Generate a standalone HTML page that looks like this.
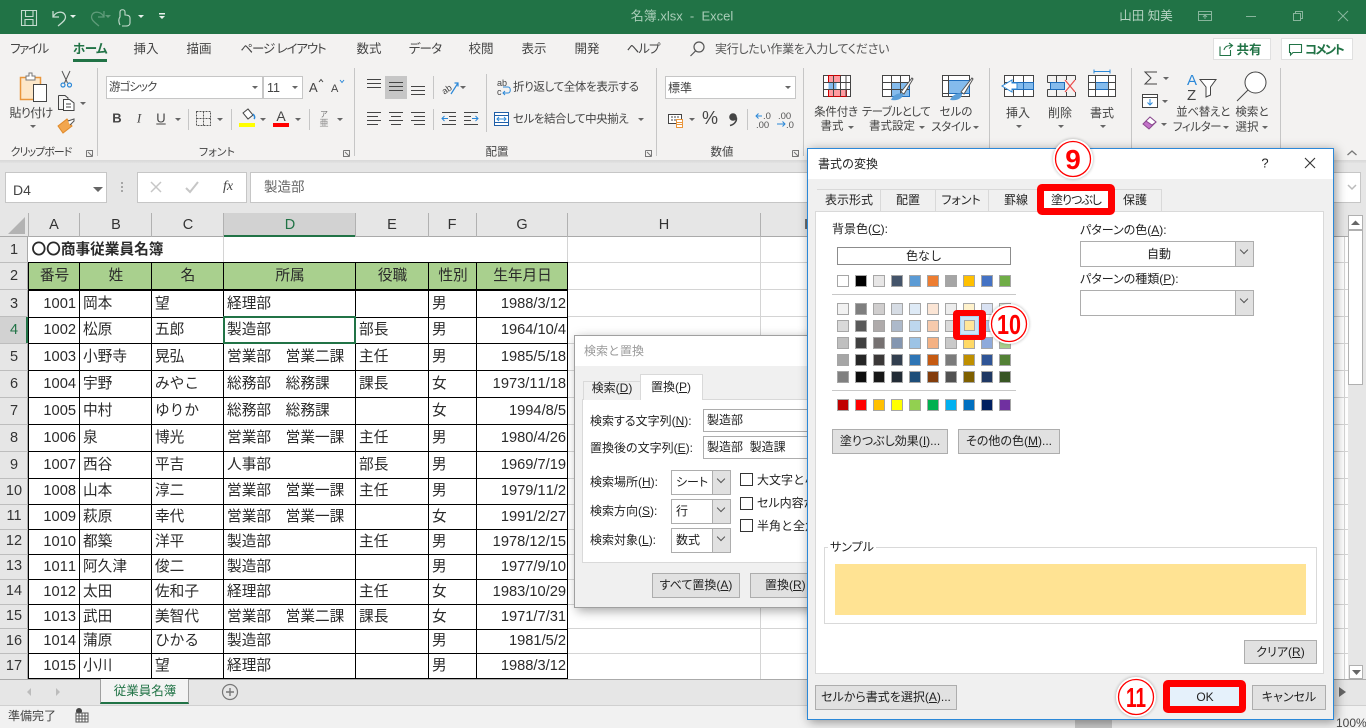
<!DOCTYPE html>
<html lang="ja"><head><meta charset="utf-8"><title>名簿.xlsx - Excel</title>
<style>
html,body{margin:0;padding:0;width:1366px;height:728px;overflow:hidden;background:#fff}
body{position:relative;font-family:"Liberation Sans","Noto Sans CJK JP",sans-serif;font-feature-settings:"palt";color:#444;font-size:12px}
.b{position:absolute;box-sizing:border-box}
.t{position:absolute;white-space:nowrap;line-height:1;transform:translateY(-50%)}
.c{transform:translate(-50%,-50%)}
svg{position:absolute;left:0;top:0}
.d{color:#222}
.btn{position:absolute;box-sizing:border-box;background:#e1e1e1;border:1px solid #adadad;color:#222;text-align:center;white-space:nowrap;font-size:12px}
.cmb{position:absolute;box-sizing:border-box;background:#fff;border:1px solid #adadad;color:#222;white-space:nowrap;font-size:12px}
.cmb i{position:absolute;right:0;top:0;bottom:0;width:17px;background:#e1e1e1;border-left:1px solid #adadad}
.cmb i:after{content:"";position:absolute;left:5px;top:5px;width:5px;height:5px;border-right:1px solid #555;border-bottom:1px solid #555;transform:rotate(45deg)}
table{position:absolute;left:28px;top:237px;border-collapse:collapse;table-layout:fixed;width:539px;font-size:14.67px;color:#2a2a2a;font-feature-settings:normal;font-kerning:none}
td{border:1px solid #000;padding:1px 2px 0 3px;white-space:nowrap;overflow:hidden;line-height:1;vertical-align:middle}
td.r{text-align:right;padding-right:1px}
td.r:first-child{padding-right:3px}
tr.h td{background:#a9d08e;text-align:center;border-bottom:2px solid #000;padding-top:2px}
.rh{position:absolute;left:0;width:28px;text-align:center;font-size:14.5px;line-height:1;transform:translateY(-50%);color:#333}
.ch{position:absolute;top:225px;font-size:14.5px;line-height:1;transform:translate(-50%,-50%);color:#333}
</style></head><body>

<!-- title bar -->
<div class="b" style="left:0;top:0;width:1366px;height:34px;background:#217346"></div>
<div class="b" style="left:0;top:34px;width:1366px;height:128px;background:#f3f2f1"></div>
<div class="b" style="left:0;top:160px;width:1366px;height:4px;background:linear-gradient(#d8d8d8,#e6e6e6)"></div>
<div class="b" style="left:0;top:163px;width:1366px;height:50px;background:#e6e6e6"></div>
<div class="t c" style="left:682px;top:16px;font-size:13px;color:#a9cdb8;font-feature-settings:normal">名簿.xlsx&nbsp; -&nbsp; Excel</div>
<div class="t c" style="left:1146px;top:16px;font-size:12.5px;color:#b5d3c2">山田 知美</div>

<!-- ribbon tabs -->
<div class="t c" style="left:29px;top:49px;font-size:12.5px;letter-spacing:-1.400px">ファイル</div>
<div class="t c" style="left:90px;top:49px;font-size:12.5px;font-weight:bold;color:#217346;letter-spacing:-.5px">ホーム</div>
<div class="b" style="left:73px;top:59px;width:34px;height:3px;background:#217346"></div>
<div class="t c" style="left:146px;top:49px;font-size:12.5px">挿入</div>
<div class="t c" style="left:199px;top:49px;font-size:12.5px">描画</div>
<div class="t c" style="left:283px;top:49px;font-size:12.5px;letter-spacing:-1.100px">ページ レイアウト</div>
<div class="t c" style="left:369px;top:49px;font-size:12.5px">数式</div>
<div class="t c" style="left:425px;top:49px;font-size:12.5px;letter-spacing:-.8px">データ</div>
<div class="t c" style="left:481px;top:49px;font-size:12.5px">校閲</div>
<div class="t c" style="left:534px;top:49px;font-size:12.5px">表示</div>
<div class="t c" style="left:587px;top:49px;font-size:12.5px">開発</div>
<div class="t c" style="left:643px;top:49px;font-size:12.5px;letter-spacing:-1px">ヘルプ</div>
<div class="t" style="left:715px;top:49px;font-size:12px;color:#555;letter-spacing:-.3px">実行したい作業を入力してください</div>
<div class="b" style="left:1213px;top:38px;width:58px;height:22px;background:#fff;border:1px solid #e0e0e0"></div>
<div class="t c" style="left:1249px;top:50px;font-size:12.5px;font-weight:bold;color:#217346">共有</div>
<div class="b" style="left:1281px;top:38px;width:72px;height:22px;background:#fff;border:1px solid #e0e0e0"></div>
<div class="t c" style="left:1324px;top:50px;font-size:12.5px;font-weight:bold;color:#217346;letter-spacing:-1.800px">コメント</div>

<!-- ribbon combo boxes -->
<div class="b" style="left:106px;top:76px;width:157px;height:23px;background:#fff;border:1px solid #c6c6c6"></div>
<div class="t" style="left:109px;top:88px;font-size:11.5px;letter-spacing:-1px">游ゴシック</div>
<div class="b" style="left:263px;top:76px;width:40px;height:23px;background:#fff;border:1px solid #c6c6c6"></div>
<div class="t" style="left:267px;top:88px;font-size:12.5px">11</div>
<div class="b" style="left:385px;top:76px;width:22px;height:23px;background:#c6c6c6"></div>
<div class="b" style="left:665px;top:76px;width:131px;height:23px;background:#fff;border:1px solid #c6c6c6"></div>
<div class="t" style="left:668px;top:88px;font-size:12px">標準</div>

<!-- ribbon text -->
<div class="t c" style="left:31px;top:113px;font-size:12px;letter-spacing:-.7px">貼り付け</div>
<div class="t c" style="left:41px;top:153px;font-size:11px;letter-spacing:-1px">クリップボード</div>
<div class="t c" style="left:217px;top:153px;font-size:11px">フォント</div>
<div class="t c" style="left:497px;top:153px;font-size:11.5px">配置</div>
<div class="t c" style="left:722px;top:153px;font-size:11.5px">数値</div>
<div class="t c" style="left:117px;top:118px;font-size:13px;font-weight:bold">B</div>
<div class="t c" style="left:139px;top:118px;font-size:13px;font-style:italic;font-family:'Liberation Serif',serif">I</div>
<div class="t c" style="left:161px;top:118px;font-size:13px;text-decoration:underline">U</div>
<div class="t" style="left:513px;top:88px;font-size:11.5px;letter-spacing:-.35px">折り返して全体を表示する</div>
<div class="t" style="left:513px;top:120px;font-size:11.5px;letter-spacing:-.45px">セルを結合して中央揃え</div>
<div class="t c" style="left:710px;top:118px;font-size:18px">%</div>
<div class="t c" style="left:836px;top:113px;font-size:11.500px;letter-spacing:-.2px">条件付き</div>
<div class="t c" style="left:832px;top:127px;font-size:11.500px">書式</div>
<div class="t c" style="left:896px;top:113px;font-size:11.500px;letter-spacing:-.5px">テーブルとして</div>
<div class="t c" style="left:892px;top:127px;font-size:11.500px">書式設定</div>
<div class="t c" style="left:956px;top:113px;font-size:11.500px">セルの</div>
<div class="t c" style="left:951px;top:128px;font-size:11.500px;letter-spacing:-.4px">スタイル</div>
<div class="t c" style="left:1018px;top:113px;font-size:12px">挿入</div>
<div class="t c" style="left:1060px;top:113px;font-size:12px">削除</div>
<div class="t c" style="left:1102px;top:113px;font-size:12px">書式</div>
<div class="t c" style="left:1203px;top:113px;font-size:11.500px;letter-spacing:-.3px">並べ替えと</div>
<div class="t c" style="left:1197px;top:128px;font-size:11.500px;letter-spacing:-.4px">フィルター</div>
<div class="t c" style="left:1252px;top:113px;font-size:11.500px">検索と</div>
<div class="t c" style="left:1247px;top:128px;font-size:11.500px">選択</div>

<!-- formula bar -->
<div class="b" style="left:5px;top:172px;width:102px;height:31px;background:#fff;border:1px solid #c6c6c6"></div>
<div class="t" style="left:13px;top:190px;font-size:14px">D4</div>
<div class="b" style="left:137px;top:172px;width:110px;height:31px;background:#fff;border:1px solid #c6c6c6"></div>
<div class="b" style="left:250px;top:172px;width:1111px;height:31px;background:#fff;border:1px solid #c6c6c6"></div>
<div class="t" style="left:264px;top:187px;font-size:13.5px;color:#666;font-feature-settings:normal">製造部</div>
<div class="t c" style="left:228px;top:187px;font-size:14px;font-style:italic;font-family:'Liberation Serif',serif;color:#444">fx</div>

<!-- column / row headers -->
<div class="b" style="left:0;top:213px;width:1348px;height:24px;background:#e6e6e6;border-bottom:1px solid #aaa"></div>
<div class="b" style="left:0;top:237px;width:28px;height:442px;background:#e6e6e6;border-right:1px solid #aaa"></div>
<div class="b" style="left:223px;top:213px;width:132px;height:24px;background:#d2d2d2;border-bottom:2px solid #217346"></div>
<div class="b" style="left:0;top:317px;width:28px;height:27px;background:#d2d2d2;border-right:2px solid #217346"></div>
<div class="ch" style="left:54px">A</div><div class="ch" style="left:116px">B</div><div class="ch" style="left:188px">C</div><div class="ch" style="left:290px;color:#217346">D</div><div class="ch" style="left:392px">E</div><div class="ch" style="left:452px">F</div><div class="ch" style="left:522px">G</div><div class="ch" style="left:664px">H</div><div class="ch" style="left:806px">I</div>
<div class="rh" style="top:250px">1</div><div class="rh" style="top:276px">2</div><div class="rh" style="top:304px">3</div><div class="rh" style="top:330px;color:#217346">4</div><div class="rh" style="top:357px">5</div><div class="rh" style="top:384px">6</div><div class="rh" style="top:411px">7</div><div class="rh" style="top:438px">8</div><div class="rh" style="top:465px">9</div><div class="rh" style="top:491px">10</div><div class="rh" style="top:516px">11</div><div class="rh" style="top:541px">12</div><div class="rh" style="top:566px">13</div><div class="rh" style="top:591px">14</div><div class="rh" style="top:616px">15</div><div class="rh" style="top:641px">16</div><div class="rh" style="top:666px">17</div>

<!-- grid -->
<svg width="1366" height="728" viewBox="0 0 1366 728">
<g stroke="#d4d4d4" fill="none">
<path d="M567 262.500H1348M567 289.500H1348M567 316.500H1348M567 343.500H1348M567 370.500H1348M567 397.500H1348M567 424.500H1348M567 451.500H1348M567 478.500H1348M567 504.500H1348M567 529.500H1348M567 554.500H1348M567 579.500H1348M567 604.500H1348M567 628.500H1348M567 653.500H1348"/>
<path d="M760.500 237V679M1344.500 237V679M223.500 237V262M567.500 237V262"/>
</g>
<g stroke="#bdbdbd" fill="none">
<path d="M0 262.500H28M0 289.500H28M0 316.500H28M0 343.500H28M0 370.500H28M0 397.500H28M0 424.500H28M0 451.500H28M0 478.500H28M0 504.500H28M0 529.500H28M0 554.500H28M0 579.500H28M0 604.500H28M0 628.500H28M0 653.500H28"/>
</g>
<g stroke="#b1b1b1" fill="none">
<path d="M28.500 213V237M79.500 213V237M151.500 213V237M223.500 213V237M355.500 213V237M428.500 213V237M476.500 213V237M567.500 213V237M760.500 213V237"/>
</g>
<path d="M25 217V234H8Z" fill="#b3b3b3"/>
</svg>

<table>
<colgroup><col style="width:51px"><col style="width:72px"><col style="width:72px"><col style="width:132px"><col style="width:73px"><col style="width:48px"><col style="width:91px"></colgroup>
<tr style="height:25px"><td colspan="3" style="border:0;border-bottom:1px solid #000;font-weight:bold;overflow:visible;padding-top:2px">〇〇商事従業員名簿</td><td colspan="4" style="border:0;border-bottom:1px solid #000;border-left:1px solid #d4d4d4"></td></tr>
<tr class="h" style="height:28px"><td>番号</td><td>姓</td><td>名</td><td>所属</td><td>役職</td><td>性別</td><td>生年月日</td></tr>
<tr style="height:27px"><td class="r">1001</td><td>岡本</td><td>望</td><td>経理部</td><td></td><td>男</td><td class="r">1988/3/12</td></tr>
<tr style="height:26px"><td class="r">1002</td><td>松原</td><td>五郎</td><td>製造部</td><td>部長</td><td>男</td><td class="r">1964/10/4</td></tr>
<tr style="height:27px"><td class="r">1003</td><td>小野寺</td><td>晃弘</td><td>営業部　営業二課</td><td>主任</td><td>男</td><td class="r">1985/5/18</td></tr>
<tr style="height:27px"><td class="r">1004</td><td>宇野</td><td>みやこ</td><td>総務部　総務課</td><td>課長</td><td>女</td><td class="r">1973/11/18</td></tr>
<tr style="height:27px"><td class="r">1005</td><td>中村</td><td>ゆりか</td><td>総務部　総務課</td><td></td><td>女</td><td class="r">1994/8/5</td></tr>
<tr style="height:27px"><td class="r">1006</td><td>泉</td><td>博光</td><td>営業部　営業一課</td><td>主任</td><td>男</td><td class="r">1980/4/26</td></tr>
<tr style="height:27px"><td class="r">1007</td><td>西谷</td><td>平吉</td><td>人事部</td><td>部長</td><td>男</td><td class="r">1969/7/19</td></tr>
<tr style="height:26px"><td class="r">1008</td><td>山本</td><td>淳二</td><td>営業部　営業一課</td><td>主任</td><td>男</td><td class="r">1979/11/2</td></tr>
<tr style="height:25px"><td class="r">1009</td><td>萩原</td><td>幸代</td><td>営業部　営業一課</td><td></td><td>女</td><td class="r">1991/2/27</td></tr>
<tr style="height:25px"><td class="r">1010</td><td>都築</td><td>洋平</td><td>製造部</td><td>主任</td><td>男</td><td class="r">1978/12/15</td></tr>
<tr style="height:25px"><td class="r">1011</td><td>阿久津</td><td>俊二</td><td>製造部</td><td></td><td>男</td><td class="r">1977/9/10</td></tr>
<tr style="height:25px"><td class="r">1012</td><td>太田</td><td>佐和子</td><td>経理部</td><td>主任</td><td>女</td><td class="r">1983/10/29</td></tr>
<tr style="height:25px"><td class="r">1013</td><td>武田</td><td>美智代</td><td>営業部　営業二課</td><td>課長</td><td>女</td><td class="r">1971/7/31</td></tr>
<tr style="height:24px"><td class="r">1014</td><td>蒲原</td><td>ひかる</td><td>製造部</td><td></td><td>男</td><td class="r">1981/5/2</td></tr>
<tr style="height:25px"><td class="r">1015</td><td>小川</td><td>望</td><td>経理部</td><td></td><td>男</td><td class="r">1988/3/12</td></tr>
<tr style="height:26px"><td class="r" style="border-bottom:0"></td><td style="border-bottom:0"></td><td style="border-bottom:0"></td><td style="border-bottom:0"></td><td style="border-bottom:0"></td><td style="border-bottom:0"></td><td style="border-bottom:0"></td></tr>
</table>
<div class="b" style="left:223px;top:316px;width:133px;height:28px;border:2px solid #217346"></div>

<!-- bottom bars -->
<div class="b" style="left:0;top:679px;width:1366px;height:28px;background:#e6e6e6;border-top:1px solid #aaa"></div>
<div class="b" style="left:0;top:705px;width:1366px;height:23px;background:#f1f1f1;border-top:1px solid #d0d0d0"></div>
<div class="b" style="left:100px;top:679px;width:89px;height:25px;background:#f3f3f3;border-left:1px solid #a0a0a0;border-right:1px solid #a0a0a0;border-bottom:2px solid #217346"></div>
<div class="t c" style="left:145px;top:691px;font-size:12.5px;color:#217346;font-feature-settings:normal">従業員名簿</div>
<div class="t" style="left:8px;top:716px;font-size:12px;color:#444;font-feature-settings:normal">準備完了</div>
<div class="b" style="left:1075px;top:720px;width:37px;height:8px;background:#c8c8c8"></div>
<div class="t" style="left:1336px;top:723px;font-size:12px;color:#444">100%</div>

<!-- scrollbar -->
<div class="b" style="left:1348px;top:213px;width:18px;height:466px;background:#e6e6e6"></div>
<div class="b" style="left:1348px;top:215px;width:15px;height:15px;background:#fff;border:1px solid #b0b0b0"></div>
<div class="b" style="left:1348px;top:230px;width:15px;height:155px;background:#fff;border:1px solid #b0b0b0"></div>
<div class="b" style="left:1349px;top:665px;width:14px;height:14px;background:#fff;border:1px solid #b0b0b0"></div>

<!-- ribbon icons -->
<svg width="1366" height="728" viewBox="0 0 1366 728">
<!-- QAT -->
<g fill="none" stroke="#c5dccf" stroke-width="1.100">
<path d="M21.500 10.500H36.500V25.500H21.500ZM25.500 10.500V16.500H33V10.500M25 25.500V19.500H33V25.500"/>
<path d="M53 11V17H59M53 17C56 11 63 11 65 15C67 19 63 22 58 26" stroke-width="1.300"/>
</g>
<g fill="none" stroke="#5e9b79" stroke-width="1.300"><path d="M104 11V17H98M104 17C101 11 94 11 92 15C90 19 94 22 99 26"/></g>
<path d="M70 15H76L73 18Z" fill="#e8f1ec"/><path d="M105 15H111L108 18Z" fill="#5e9b79"/><path d="M138 15H144L141 18Z" fill="#e8f1ec"/>
<path d="M159 13H165V14.500H159ZM159 16H165L162 19Z" fill="#e8f1ec"/>
<path d="M120 25C118 21 119 18 120 17V12C120 9 125 9 125 12V15C128 15 130 16 130 18V23C130 25 128 26 126 26H122" fill="none" stroke="#c5dccf" stroke-width="1.100"/>
<!-- window buttons -->
<g fill="none" stroke="#88b59c" stroke-width="1">
<path d="M1198.500 11.500H1211.500V20.500H1198.500ZM1198.500 14.500H1211.500M1205 19V15M1203 17L1205 15L1207 17"/>
<path d="M1246 16.500H1256"/>
<path d="M1293.500 13.500H1300.500V20.500H1293.500ZM1295.500 13.500V11.500H1302.500V18.500H1300.500"/>
<path d="M1338 11L1348 21M1348 11L1338 21"/>
</g>
<!-- tell me / share / comment -->
<g fill="none" stroke="#555" stroke-width="1.200"><circle cx="699" cy="47" r="5"/><path d="M695.500 51L690.500 56"/></g>
<g fill="none" stroke="#217346" stroke-width="1.100"><path d="M1220 46.500V55.500H1230.500V50M1224 50C1225 46 1228 45.500 1232 45.500M1229 43L1232.500 45.500L1229 48.500"/><path d="M1289.500 44.500H1301.500V52.500H1293L1290.500 55V52.500H1289.500Z"/></g>
<!-- group separators -->
<g stroke="#c6c6c6"><path d="M97.500 68V156M354.500 68V156M656.500 68V156M803.500 68V156M989.500 68V156M1131.500 68V156M1280.500 68V156M188.500 109V130M231.500 109V130M309.500 109V130M433.500 76V99M433.500 109V130M486.500 74V132M747.500 109V130"/></g>
<!-- clipboard -->
<rect x="20.500" y="77.500" width="20" height="22" fill="#fde7c8" stroke="#e9963c" stroke-width="1.500"/>
<path d="M26 76H29V73H32V76H35V80H26Z" fill="#fff" stroke="#777"/>
<rect x="33.500" y="84.500" width="13" height="17" fill="#fff" stroke="#444"/>
<g fill="none" stroke="#555"><path d="M62 71L67.500 83M70 71L64.500 83"/></g>
<g fill="none" stroke="#2b88d8" stroke-width="1.200"><circle cx="63" cy="85" r="2"/><circle cx="69.500" cy="85" r="2"/></g>
<g fill="none" stroke="#444"><path d="M58.500 95.500H65L68 98V110H63M58.500 95.500V109.500H63"/><path d="M63.500 99.500H69.500L74 103V110.500H63.500Z" fill="#fff"/><path d="M66 104H71M66 107H71"/></g>
<path d="M58 126L67 119L72 126L63 133Z" fill="#f2a64e" stroke="#e08a2a"/><path d="M68 121L74 119V121L70 125" fill="#fff" stroke="#555"/>
<!-- launchers -->
<g fill="none" stroke="#777"><path d="M86.500 150.500H92.500V156.500M86.500 150.500V156.500H92.500M88 152L92 156M343.500 150.500H349.500V156.500M343.500 150.500V156.500H349.500M345 152L349 156M645.500 150.500H651.500V156.500M645.500 150.500V156.500H651.500M647 152L651 156M792.500 150.500H798.500V156.500M792.500 150.500V156.500H798.500M794 152L798 156"/></g>
<!-- carets -->
<g fill="#666"><path d="M30 125H36L33 128ZM80 102H86L83 105ZM252 86H258L255 89ZM292 86H298L295 89ZM175 118H181L178 121ZM217 118H223L220 121ZM260 118H266L263 121ZM295 118H301L298 121ZM337 118H343L340 121ZM460 86H466L463 89ZM638 118H644L641 121ZM785 86H791L788 89ZM689 118H695L692 121ZM848 126H854L851 129ZM919 126H925L922 129ZM973 126H979L976 129ZM1016 125H1022L1019 128ZM1058 125H1064L1061 128ZM1100 125H1106L1103 128ZM1163 77H1169L1166 80ZM1162 100H1168L1165 103ZM1161 123H1167L1164 126ZM1223 126H1229L1226 129ZM1262 126H1268L1265 129ZM93 187H103L98 192Z"/></g>
<!-- font grow / shrink, A -->
<text x="309" y="92" font-size="13" fill="#444" font-family="Liberation Sans">A</text><path d="M319 82L321 79.500L323 82" fill="none" stroke="#444"/>
<text x="331" y="92" font-size="11" fill="#444" font-family="Liberation Sans">A</text><path d="M340 80L342 82.500L344 80" fill="none" stroke="#2b88d8"/>
<!-- border -->
<path d="M196.500 111.500H210.500V125.500H196.500ZM203.500 111.500V125.500M196.500 118.500H210.500" fill="none" stroke="#555" stroke-dasharray="2 1"/>
<!-- fill -->
<path d="M243 113L248 109L253 115L248 119Z" fill="#fff" stroke="#444"/><path d="M253 114C255 116 255 118 254 119" stroke="#2b88d8" fill="none" stroke-width="1.500"/>
<rect x="239" y="123" width="16" height="4" fill="#ff0"/>
<text x="281" y="121" font-size="14" fill="#444" text-anchor="middle" font-family="Liberation Sans">A</text>
<rect x="273" y="123" width="16" height="4" fill="#f00"/>
<text x="324" y="117" font-size="8" fill="#777" text-anchor="middle" font-family="Noto Sans CJK JP">ア</text><text x="324" y="126" font-size="9" fill="#888" text-anchor="middle" font-family="Noto Sans CJK JP">亜</text>
<!-- alignment -->
<g stroke="#444" fill="none">
<path d="M367 79.500H381M367 83.500H381M367 87.500H381"/>
<path d="M389 82.500H403M389 86.500H403M389 90.500H403"/>
<path d="M411 86.500H425M411 90.500H425M411 94.500H425"/>
<path d="M367 112.500H381M367 116.500H378M367 120.500H381M367 124.500H378"/>
<path d="M389 112.500H403M391 116.500H401M389 120.500H403M391 124.500H401"/>
<path d="M411 112.500H425M414 116.500H425M411 120.500H425M414 124.500H425"/>
<path d="M442 112.500H456M449 116.500H456M449 120.500H456M442 124.500H456"/>
<path d="M464 112.500H478M464 116.500H471M464 120.500H471M464 124.500H478"/>
</g>
<path d="M442 118.500H448M444.500 116L442 118.500L444.500 121" stroke="#2b88d8" fill="none"/>
<path d="M472 118.500H478M475.500 116L478 118.500L475.500 121" stroke="#2b88d8" fill="none"/>
<text x="441" y="92" font-size="9" fill="#444" transform="rotate(-35 447 88)" font-family="Liberation Sans">ab</text>
<path d="M451 94L458 83M454.500 83H458V86.500" stroke="#2b88d8" fill="none" stroke-width="1.200"/>
<!-- wrap / merge -->
<text x="497" y="86" font-size="9" fill="#444" font-family="Liberation Sans">ab</text><text x="497" y="95" font-size="9" fill="#444" font-family="Liberation Sans">c</text>
<path d="M503 87H508C511 87 511 93 508 93H503M505 91L503 93L505 95" fill="none" stroke="#2b88d8"/>
<path d="M494.500 112.500H508.500V125.500H494.500Z" fill="#fff" stroke="#1f5fa8"/><path d="M494.500 115.500H508.500M494.500 122.500H508.500" stroke="#1f5fa8"/><path d="M497 119H506M499 117L497 119L499 121M504 117L506 119L504 121" stroke="#2b88d8" fill="none"/>
<!-- number -->
<rect x="668.500" y="114.500" width="13" height="9" fill="#fff" stroke="#444"/><path d="M671 117H679M671 120H676" stroke="#444" stroke-dasharray="2 1"/>
<rect x="676.500" y="119.500" width="6" height="8" fill="#fff" stroke="#e9963c"/><path d="M676.500 122.500H682.500M676.500 124.500H682.500" stroke="#e9963c"/>
<circle cx="733" cy="117" r="3.800" fill="#444"/><path d="M736.300 117.500C737 121 734.500 124.500 730 125.500" fill="none" stroke="#444" stroke-width="1.600"/>
<path d="M756 116H762M758.500 113.500L756 116L758.500 118.500" stroke="#2b88d8" fill="none"/>
<text x="763" y="119" font-size="9.500" fill="#555" font-family="Liberation Sans">.0</text><text x="756" y="128" font-size="9.500" fill="#555" font-family="Liberation Sans">.00</text>
<text x="778" y="119" font-size="9.500" fill="#555" font-family="Liberation Sans">.00</text>
<path d="M777 124H785M782.500 121.500L785 124L782.500 126.500" stroke="#2b88d8" fill="none"/><text x="786" y="128" font-size="9.500" fill="#555" font-family="Liberation Sans">.0</text>
<!-- conditional format -->
<g>
<rect x="823.500" y="75.500" width="27" height="21" fill="#fff" stroke="#444"/>
<rect x="828.500" y="75.500" width="12" height="7" fill="#ff9ba0" stroke="#c00"/>
<rect x="828.500" y="82.500" width="8" height="7" fill="#84bbec"/>
<rect x="828.500" y="89.500" width="18" height="7" fill="#ff9ba0" stroke="#c00"/>
<path d="M823.500 82.500H850.500M823.500 89.500H850.500M833.500 75.500V96.500M840.500 75.500V96.500M846 75.500V96.500" stroke="#444" fill="none"/>
<!-- table format -->
<rect x="882.500" y="75.500" width="27" height="21" fill="#fff" stroke="#444"/>
<rect x="891.500" y="82.500" width="18" height="14" fill="#84bbec" stroke="#1f6dbb"/>
<path d="M882.500 82.500H909.500M882.500 89.500H909.500M891.500 75.500V96.500M900.500 75.500V96.500" stroke="#444" fill="none"/>
<path d="M901 92L912 78L913 79L904 94Z" fill="#fff" stroke="#555"/><path d="M891 100C893 95 899 92 903 94C903 98 899 101 891 100Z" fill="#5a9ed8"/>
<!-- cell styles -->
<rect x="942.500" y="75.500" width="27" height="21" fill="#fff" stroke="#444"/>
<rect x="948.500" y="80.500" width="21" height="13" fill="#84bbec" stroke="#1f6dbb"/>
<path d="M942.500 80.500H948.500M942.500 93.500H948.500M948.500 75.500V96.500" stroke="#444" fill="none"/>
<path d="M961 92L972 78L973 79L964 94Z" fill="#fff" stroke="#555"/><path d="M950 100C952 95 958 92 962 94C962 98 958 101 950 100Z" fill="#5a9ed8"/>
<!-- insert -->
<rect x="1004.500" y="75.500" width="29" height="21" fill="#fff" stroke="#444"/>
<path d="M1004.500 82.500H1033.500M1004.500 89.500H1033.500M1013.500 75.500V96.500M1023.500 75.500V96.500" stroke="#444" fill="none"/>
<rect x="1009" y="82.500" width="24.500" height="7" fill="#84bbec" stroke="#1f6dbb"/>
<path d="M1023.500 82.500V89.500" stroke="#1f6dbb"/>
<path d="M1012 83H1017V89H1012V92L1002 86L1012 80Z" fill="#fff" stroke="#2b88d8"/>
<!-- delete -->
<path d="M1047.500 75.500H1075.500M1047.500 96.500H1075.500M1047.500 75.500V82.500M1047.500 89.500V96.500M1075.500 75.500V80M1075.500 92V96.500M1047.500 82.500H1050M1047.500 89.500H1050M1056.500 75.500V82M1066.500 75.500V80M1056.500 90V96.500M1066.500 92V96.500" stroke="#444" fill="none"/>
<rect x="1050.500" y="82.500" width="14" height="7" fill="#84bbec" stroke="#1f6dbb"/>
<path d="M1065 80L1075 92M1075 80L1065 92" stroke="#ea4c4c" stroke-width="1.200" fill="none"/>
<!-- format -->
<path d="M1094 71.500H1110M1094 69.500V73.500M1110 69.500V73.500" stroke="#2b88d8" fill="none"/>
<rect x="1088.500" y="75.500" width="27" height="21" fill="#fff" stroke="#444"/>
<rect x="1095.500" y="82.500" width="13" height="7" fill="#84bbec" stroke="#1f6dbb"/>
<path d="M1088.500 82.500H1095.500M1108.500 82.500H1115.500M1088.500 89.500H1095.500M1108.500 89.500H1115.500M1095.500 75.500V96.500M1108.500 75.500V96.500" stroke="#444" fill="none"/>
</g>
<!-- editing -->
<path d="M1157 72H1145L1151 78L1145 84H1157" fill="none" stroke="#444"/>
<rect x="1142.500" y="94.500" width="15" height="13" fill="#fff" stroke="#444"/><path d="M1142.500 97.500H1157.500" stroke="#444"/><path d="M1150 99V105M1147.500 102.500L1150 105L1152.500 102.500" stroke="#2b88d8" fill="none"/>
<path d="M1143 124L1150 117L1156 122L1149 129Z" fill="#c372c9" stroke="#8a4a8f"/><path d="M1150 117L1156 122L1152 125L1146 121Z" fill="#fff" stroke="#8a4a8f"/>
<text x="1187" y="85" font-size="15" fill="#2b88d8" font-family="Liberation Sans">A</text>
<text x="1187" y="100" font-size="15" fill="#444" font-family="Liberation Sans">Z</text>
<path d="M1200 79.500H1216L1210.500 87V95L1206 97V87Z" fill="#fff" stroke="#444"/>
<circle cx="1255.500" cy="82.500" r="10.500" fill="#fff" stroke="#444"/><path d="M1248 90L1237 101" stroke="#444"/>
<path d="M1347.500 155L1352 151L1356.500 155" fill="none" stroke="#777" stroke-width="1.300"/>
<!-- formula bar -->
<g fill="#a6a6a6"><rect x="121" y="182" width="2" height="2"/><rect x="121" y="186" width="2" height="2"/><rect x="121" y="190" width="2" height="2"/></g>
<path d="M151 182L161 192M161 182L151 192" stroke="#c6c6c6" stroke-width="1.500" fill="none"/>
<path d="M186 188L190 192L198 182" stroke="#c6c6c6" stroke-width="2" fill="none"/>
<path d="M1348 185L1352 189L1356 185" stroke="#bbb" stroke-width="1.500" fill="none"/>
<!-- scrollbar arrows -->
<path d="M1351 225H1360L1355.500 220.500Z" fill="#666"/><path d="M1352 670H1361L1356.500 675Z" fill="#666"/>
<!-- sheet bar -->
<path d="M31 688V696L27 692Z" fill="#bcbcbc"/><path d="M56 688V696L60 692Z" fill="#bcbcbc"/>
<circle cx="230" cy="692" r="7.500" fill="none" stroke="#777" stroke-width="1.200"/><path d="M230 688V696M226 692H234" stroke="#777" stroke-width="1.400"/>
<path d="M1339 687V697L1346 692Z" fill="#666"/>
<!-- macro -->
<circle cx="79" cy="711" r="3" fill="#444"/><path d="M76 713H88V722H76Z" fill="#fff" stroke="#555"/><path d="M76 716H88M76 719H88M79 713V722M82 713V722M85 713V722" stroke="#555"/>
</svg>

<!-- find & replace dialog -->
<div class="b" style="left:574px;top:335px;width:250px;height:273px;background:#f0f0f0;border:1px solid #a0a0a0;box-shadow:3px 3px 10px rgba(0,0,0,.35)"></div>
<div class="b" style="left:575px;top:336px;width:249px;height:30px;background:#fff"></div>
<div class="t" style="left:584px;top:351px;font-size:12px;color:#9a9a9a;font-feature-settings:normal">検索と置換</div>
<div class="b" style="left:582px;top:399px;width:240px;height:164px;background:#fff;border:1px solid #d9d9d9"></div>
<div class="b" style="left:583px;top:381px;width:58px;height:19px;background:#f0f0f0;border:1px solid #d9d9d9;border-bottom:0"></div>
<div class="b" style="left:640px;top:374px;width:63px;height:26px;background:#fff;border:1px solid #d9d9d9;border-bottom:0"></div>
<div class="t c" style="left:612px;top:388px;font-size:12px;color:#222">検索(<u>D</u>)</div>
<div class="t c" style="left:671px;top:387px;font-size:12px;color:#222">置換(<u>P</u>)</div>
<div class="t d" style="left:590px;top:421px;font-size:12px">検索する文字列(<u>N</u>):</div>
<div class="t d" style="left:590px;top:448px;font-size:12px">置換後の文字列(<u>E</u>):</div>
<div class="t d" style="left:590px;top:482px;font-size:12px">検索場所(<u>H</u>):</div>
<div class="t d" style="left:590px;top:511px;font-size:12px">検索方向(<u>S</u>):</div>
<div class="t d" style="left:590px;top:540px;font-size:12px">検索対象(<u>L</u>):</div>
<div class="b" style="left:703px;top:409px;width:120px;height:23px;background:#fff;border:1px solid #adadad"></div>
<div class="b" style="left:703px;top:436px;width:120px;height:23px;background:#fff;border:1px solid #adadad"></div>
<div class="t d" style="left:707px;top:420px;font-size:12px;font-feature-settings:normal">製造部</div>
<div class="t d" style="left:707px;top:447px;font-size:12px;font-feature-settings:normal">製造部&nbsp; 製造課</div>
<div class="cmb" style="left:671px;top:470px;width:60px;height:25px"><span class="t" style="left:4px;top:11px">シート</span><i></i></div>
<div class="cmb" style="left:671px;top:499px;width:60px;height:25px"><span class="t" style="left:4px;top:11px">行</span><i></i></div>
<div class="cmb" style="left:671px;top:528px;width:60px;height:25px"><span class="t" style="left:4px;top:11px">数式</span><i></i></div>
<div class="b" style="left:740px;top:473px;width:13px;height:13px;background:#fff;border:1px solid #333"></div>
<div class="b" style="left:740px;top:497px;width:13px;height:13px;background:#fff;border:1px solid #333"></div>
<div class="b" style="left:740px;top:519px;width:13px;height:13px;background:#fff;border:1px solid #333"></div>
<div class="t d" style="left:757px;top:480px;font-size:12px;font-feature-settings:normal">大文字と小文字</div>
<div class="t d" style="left:757px;top:503px;font-size:12px">セル内容が完全</div>
<div class="t d" style="left:757px;top:526px;font-size:12px;font-feature-settings:normal">半角と全角を</div>
<div class="btn" style="left:652px;top:573px;width:88px;height:25px;line-height:23px">すべて置換(<u>A</u>)</div>
<div class="btn" style="left:750px;top:573px;width:70px;height:25px;line-height:23px;text-align:left;padding-left:14px">置換(<u>R</u>)</div>

<!-- format cells dialog -->
<div class="b" style="left:807px;top:148px;width:527px;height:572px;background:#f0f0f0;border:1px solid #2b88d8;box-shadow:2px 2px 10px rgba(0,0,0,.4)"></div>
<div class="b" style="left:808px;top:149px;width:525px;height:30px;background:#fff"></div>
<div class="t" style="left:818px;top:164px;font-size:12px;color:#222;font-feature-settings:normal">書式の変換</div>
<div class="t c" style="left:1265px;top:163px;font-size:13px;color:#222">?</div>
<div class="b" style="left:815px;top:211px;width:509px;height:463px;background:#fff;border:1px solid #d9d9d9"></div>
<svg width="1366" height="728" viewBox="0 0 1366 728">
<path d="M1305 158L1315 168M1315 158L1305 168" stroke="#333" stroke-width="1.100" fill="none"/>
<path d="M817 189.500H1161M880.500 189V211M935.500 189V211M988.500 189V211M1161.500 189V211" stroke="#d9d9d9" fill="none"/>
<path d="M832 294.500H1016M832 390.500H1016" stroke="#c8c8c8"/>
<g stroke="#a6a6a6">
<rect x="837.500" y="275.500" width="11" height="11" fill="#fff"/><rect x="855.500" y="275.500" width="11" height="11" fill="#000"/><rect x="873.500" y="275.500" width="11" height="11" fill="#e7e6e6"/><rect x="891.500" y="275.500" width="11" height="11" fill="#44546a"/><rect x="909.500" y="275.500" width="11" height="11" fill="#5b9bd5"/><rect x="927.500" y="275.500" width="11" height="11" fill="#ed7d31"/><rect x="945.500" y="275.500" width="11" height="11" fill="#a5a5a5"/><rect x="963.500" y="275.500" width="11" height="11" fill="#ffc000"/><rect x="981.500" y="275.500" width="11" height="11" fill="#4472c4"/><rect x="999.500" y="275.500" width="11" height="11" fill="#70ad47"/>
<rect x="837.500" y="303.500" width="11" height="11" fill="#f2f2f2"/><rect x="855.500" y="303.500" width="11" height="11" fill="#7f7f7f"/><rect x="873.500" y="303.500" width="11" height="11" fill="#d0cece"/><rect x="891.500" y="303.500" width="11" height="11" fill="#d6dce4"/><rect x="909.500" y="303.500" width="11" height="11" fill="#deeaf6"/><rect x="927.500" y="303.500" width="11" height="11" fill="#fbe5d5"/><rect x="945.500" y="303.500" width="11" height="11" fill="#ededed"/><rect x="963.500" y="303.500" width="11" height="11" fill="#fff2cc"/><rect x="981.500" y="303.500" width="11" height="11" fill="#d9e2f3"/><rect x="999.500" y="303.500" width="11" height="11" fill="#e2efd9"/>
<rect x="837.500" y="320.500" width="11" height="11" fill="#d9d9d9"/><rect x="855.500" y="320.500" width="11" height="11" fill="#595959"/><rect x="873.500" y="320.500" width="11" height="11" fill="#afabab"/><rect x="891.500" y="320.500" width="11" height="11" fill="#adb9ca"/><rect x="909.500" y="320.500" width="11" height="11" fill="#bdd7ee"/><rect x="927.500" y="320.500" width="11" height="11" fill="#f7caac"/><rect x="945.500" y="320.500" width="11" height="11" fill="#dbdbdb"/><rect x="981.500" y="320.500" width="11" height="11" fill="#b4c6e7"/><rect x="999.500" y="320.500" width="11" height="11" fill="#c5e0b3"/>
<rect x="837.500" y="337.500" width="11" height="11" fill="#bfbfbf"/><rect x="855.500" y="337.500" width="11" height="11" fill="#404040"/><rect x="873.500" y="337.500" width="11" height="11" fill="#767171"/><rect x="891.500" y="337.500" width="11" height="11" fill="#8496b0"/><rect x="909.500" y="337.500" width="11" height="11" fill="#9cc3e5"/><rect x="927.500" y="337.500" width="11" height="11" fill="#f4b183"/><rect x="945.500" y="337.500" width="11" height="11" fill="#c9c9c9"/><rect x="963.500" y="337.500" width="11" height="11" fill="#ffd966"/><rect x="981.500" y="337.500" width="11" height="11" fill="#8eaadb"/><rect x="999.500" y="337.500" width="11" height="11" fill="#a8d08d"/>
<rect x="837.500" y="354.500" width="11" height="11" fill="#a6a6a6"/><rect x="855.500" y="354.500" width="11" height="11" fill="#262626"/><rect x="873.500" y="354.500" width="11" height="11" fill="#3b3838"/><rect x="891.500" y="354.500" width="11" height="11" fill="#323f4f"/><rect x="909.500" y="354.500" width="11" height="11" fill="#2e75b5"/><rect x="927.500" y="354.500" width="11" height="11" fill="#c55a11"/><rect x="945.500" y="354.500" width="11" height="11" fill="#7b7b7b"/><rect x="963.500" y="354.500" width="11" height="11" fill="#bf8f00"/><rect x="981.500" y="354.500" width="11" height="11" fill="#2f5496"/><rect x="999.500" y="354.500" width="11" height="11" fill="#538135"/>
<rect x="837.500" y="371.500" width="11" height="11" fill="#808080"/><rect x="855.500" y="371.500" width="11" height="11" fill="#0d0d0d"/><rect x="873.500" y="371.500" width="11" height="11" fill="#171717"/><rect x="891.500" y="371.500" width="11" height="11" fill="#222b35"/><rect x="909.500" y="371.500" width="11" height="11" fill="#1e4e79"/><rect x="927.500" y="371.500" width="11" height="11" fill="#833c0b"/><rect x="945.500" y="371.500" width="11" height="11" fill="#525252"/><rect x="963.500" y="371.500" width="11" height="11" fill="#7f6000"/><rect x="981.500" y="371.500" width="11" height="11" fill="#1f3864"/><rect x="999.500" y="371.500" width="11" height="11" fill="#385623"/>
<rect x="837.500" y="399.500" width="11" height="11" fill="#c00000"/><rect x="855.500" y="399.500" width="11" height="11" fill="#f00"/><rect x="873.500" y="399.500" width="11" height="11" fill="#ffc000"/><rect x="891.500" y="399.500" width="11" height="11" fill="#ff0"/><rect x="909.500" y="399.500" width="11" height="11" fill="#92d050"/><rect x="927.500" y="399.500" width="11" height="11" fill="#00b050"/><rect x="945.500" y="399.500" width="11" height="11" fill="#00b0f0"/><rect x="963.500" y="399.500" width="11" height="11" fill="#0070c0"/><rect x="981.500" y="399.500" width="11" height="11" fill="#002060"/><rect x="999.500" y="399.500" width="11" height="11" fill="#7030a0"/>
</g>
</svg>
<div class="t c" style="left:849px;top:200px;font-size:12px;color:#222">表示形式</div>
<div class="t c" style="left:908px;top:200px;font-size:12px;color:#222">配置</div>
<div class="t c" style="left:961px;top:200px;font-size:12px;color:#222">フォント</div>
<div class="t c" style="left:1016px;top:200px;font-size:12px;color:#222">罫線</div>
<div class="t c" style="left:1135px;top:200px;font-size:12px;color:#222">保護</div>
<div class="t d" style="left:832px;top:229px;font-size:12px">背景色(<u>C</u>):</div>
<div class="b" style="left:837px;top:247px;width:174px;height:18px;background:#fff;border:1px solid #8c8c8c"></div>
<div class="t c d" style="left:924px;top:256px;font-size:12px;font-feature-settings:normal">色なし</div>
<div class="t d" style="left:1080px;top:230px;font-size:12px">パターンの色(<u>A</u>):</div>
<div class="cmb" style="left:1080px;top:241px;width:174px;height:26px;border-width:1px"><span class="t c" style="left:78px;top:12px">自動</span><i></i></div>
<div class="t d" style="left:1080px;top:279px;font-size:12px">パターンの種類(<u>P</u>):</div>
<div class="cmb" style="left:1080px;top:290px;width:174px;height:26px"><i></i></div>
<div class="btn" style="left:832px;top:429px;width:116px;height:25px;line-height:23px">塗りつぶし効果(<u>I</u>)...</div>
<div class="btn" style="left:958px;top:429px;width:102px;height:25px;line-height:23px">その他の色(<u>M</u>)...</div>
<div class="b" style="left:824px;top:547px;width:493px;height:77px;border:1px solid #d9d9d9"></div>
<div class="t d" style="left:828px;top:547px;font-size:12px;background:#fff;padding:0 2px">サンプル</div>
<div class="b" style="left:835px;top:564px;width:471px;height:51px;background:#ffe393"></div>
<div class="btn" style="left:1244px;top:640px;width:73px;height:24px;line-height:22px">クリア(<u>R</u>)</div>
<div class="btn" style="left:815px;top:685px;width:142px;height:25px;line-height:23px">セルから書式を選択(<u>A</u>)...</div>
<div class="btn" style="left:1252px;top:685px;width:74px;height:25px;line-height:23px">キャンセル</div>

<!-- red highlights -->
<div class="b" style="left:1037px;top:184px;width:78px;height:31px;background:#fff;border:7px solid #f00;border-radius:5px"></div>
<div class="t c" style="left:1076px;top:200px;font-size:12px;color:#222;letter-spacing:-1px">塗りつぶし</div>
<div class="b" style="left:953px;top:310px;width:33px;height:30px;background:#f00;border-radius:4px"></div>
<div class="b" style="left:960px;top:316px;width:19px;height:19px;background:#cbe5f9;border:1px solid #a8d4f5"></div>
<div class="b" style="left:964px;top:320px;width:11px;height:11px;background:#ffe699;border:1px solid #a6a6a6"></div>
<div class="b" style="left:1163px;top:680px;width:83px;height:33px;background:#e5f1fb;border:7px solid #f00;border-radius:5px"></div>
<div class="t c" style="left:1205px;top:697px;font-size:12px;color:#222">OK</div>

<!-- callouts -->
<svg width="1366" height="728" viewBox="0 0 1366 728">
<defs><filter id="g" x="-30%" y="-30%" width="160%" height="160%"><feGaussianBlur stdDeviation="1.500"/></filter></defs>
<g filter="url(#g)" fill="#000" opacity=".3"><circle cx="1073" cy="159" r="20"/><circle cx="1009" cy="324" r="20"/><circle cx="1136" cy="697" r="20"/></g>
<g fill="#fff"><circle cx="1073" cy="159" r="20"/><circle cx="1009" cy="324" r="20"/><circle cx="1136" cy="697" r="20"/></g>
<g fill="none" stroke="#f00" stroke-width="1.300"><circle cx="1073" cy="159" r="17.500"/><circle cx="1009" cy="324" r="17.500"/><circle cx="1136" cy="697" r="17.500"/></g>
<g fill="#f00" font-weight="bold" text-anchor="middle" font-family="Liberation Sans">
<text x="1073" y="169" font-size="28">9</text>
<text x="1009" y="334" font-size="28" textLength="24" lengthAdjust="spacingAndGlyphs">10</text>
<text x="1136" y="707" font-size="28" textLength="20" lengthAdjust="spacingAndGlyphs">11</text>
</g>
</svg>
</body></html>
